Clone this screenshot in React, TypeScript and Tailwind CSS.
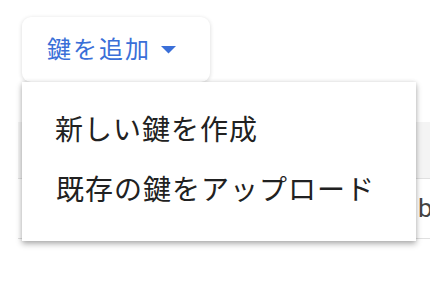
export default function App() {
  return (
    <div
      className="relative w-[430px] h-[282px] overflow-hidden bg-white"
      style={{ fontFamily: 'Roboto, "Noto Sans CJK JP", sans-serif' }}
    >
      {/* Add key button */}
      <div className="pt-[17px] pl-[22px]">
        <button
          type="button"
          className="flex items-center h-[65px] w-[188px] pl-[25px] rounded-[9px] bg-white shadow-[0_1px_4px_rgba(0,0,0,0.16)] text-[24px] tracking-[2px] text-[#3a6fd8]"
        >
          鍵を追加
          <svg width="15" height="8" viewBox="0 0 15 8" className="ml-[10px]" aria-hidden="true">
            <polygon points="0,0 15,0 7.5,7.5" fill="#3a6fd8" />
          </svg>
        </button>
      </div>

      {/* Table behind the menu */}
      <div className="mt-[40px] ml-[18px]">
        <div className="h-[57px] bg-[#f4f4f4] border-b border-[#e0e0e0]" />
        <div className="h-[60px] flex items-center border-b border-[#e0e0e0]">
          <span className="ml-[400px] text-[26px] text-[#444]">b</span>
        </div>
      </div>

      {/* Dropdown menu */}
      <div className="absolute left-[22px] top-[82px] w-[394px] h-[159px] pt-[19px] bg-white shadow-[0_3px_6px_rgba(0,0,0,0.3),0_0_4px_rgba(0,0,0,0.1)]">
        <div className="h-[60px] flex items-center pl-[33px] text-[28px] tracking-[1px] text-[#212121]">
          新しい鍵を作成
        </div>
        <div className="h-[60px] flex items-center pl-[34px] text-[28px] tracking-[1px] text-[#212121]">
          既存の鍵をアップロード
        </div>
      </div>
    </div>
  )
}
